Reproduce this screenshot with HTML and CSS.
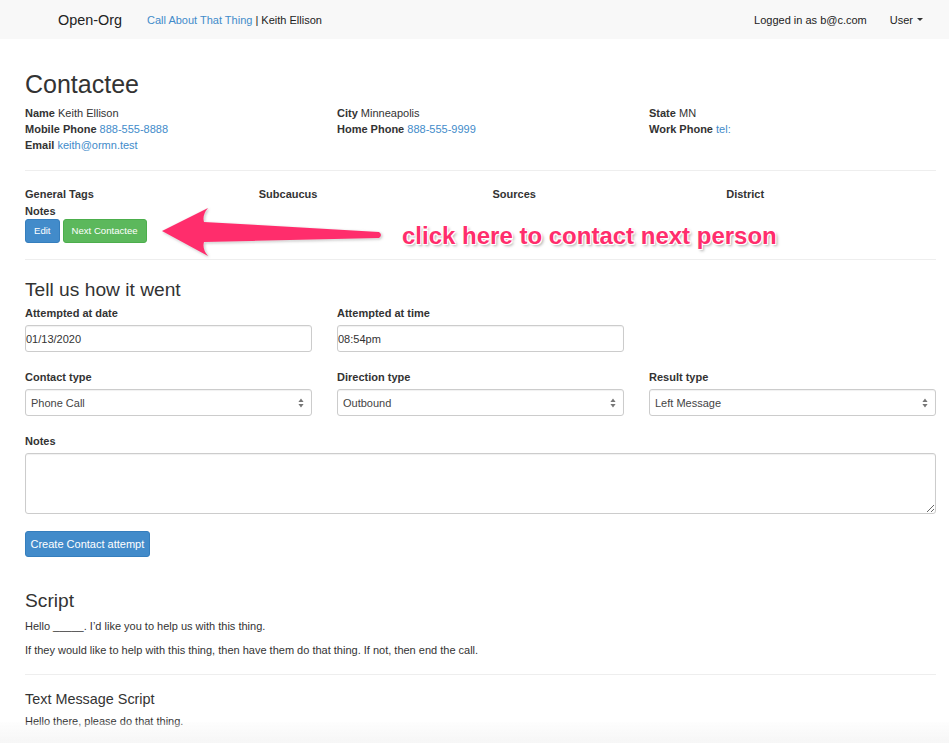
FILE: index.html
```html
<!DOCTYPE html>
<html lang="en">
<head>
<meta charset="utf-8">
<title>Open-Org</title>
<link rel="stylesheet" href="styles.css">
</head>
<body>
<nav class="navbar">
  <div class="nav-left">
    <span class="brand">Open-Org</span>
    <span class="crumb"><a href="#">Call About That Thing</a> | Keith Ellison</span>
  </div>
  <div class="nav-right">
    <span class="logged">Logged in as b@c.com</span>
    <span class="user">User <span class="caret"></span></span>
  </div>
</nav>

<main class="container">
  <h1 class="title">Contactee</h1>
  <div class="grid3 info">
    <div>
      <div><b>Name</b> Keith Ellison</div>
      <div><b>Mobile Phone</b> <a href="#">888-555-8888</a></div>
      <div><b>Email</b> <a href="#">keith@ormn.test</a></div>
    </div>
    <div>
      <div><b>City</b> Minneapolis</div>
      <div><b>Home Phone</b> <a href="#">888-555-9999</a></div>
    </div>
    <div>
      <div><b>State</b> MN</div>
      <div><b>Work Phone</b> <a href="#">tel:</a></div>
    </div>
  </div>
  <hr class="hr-a">
  <div class="grid4 tags">
    <b>General Tags</b><b>Subcaucus</b><b>Sources</b><b>District</b>
  </div>
  <div class="notes-label">Notes</div>
  <div class="btns">
    <button class="btn btn-sm btn-primary">Edit</button>
    <button class="btn btn-sm btn-success">Next Contactee</button>
  </div>
  <hr class="hr-b">

  <h3 class="h3-tell">Tell us how it went</h3>
  <div class="grid3 form-group">
    <div>
      <label>Attempted at date</label>
      <input class="form-control plain" type="text" value="01/13/2020">
    </div>
    <div>
      <label>Attempted at time</label>
      <input class="form-control plain" type="text" value="08:54pm">
    </div>
  </div>
  <div class="grid3 form-group">
    <div>
      <label>Contact type</label>
      <select class="form-control select"><option>Phone Call</option></select>
    </div>
    <div>
      <label>Direction type</label>
      <select class="form-control select"><option>Outbound</option></select>
    </div>
    <div>
      <label>Result type</label>
      <select class="form-control select"><option>Left Message</option></select>
    </div>
  </div>
  <div class="form-group">
    <label>Notes</label>
    <textarea class="form-control notes"></textarea>
  </div>
  <div class="submit-row">
    <button class="btn btn-primary btn-create">Create Contact attempt</button>
  </div>

  <h3 class="h3-script">Script</h3>
  <p>Hello _____. I’d like you to help us with this thing.</p>
  <p>If they would like to help with this thing, then have them do that thing. If not, then end the call.</p>
  <hr class="hr-c">
  <h4 class="h4-text">Text Message Script</h4>
  <p>Hello there, please do that thing.</p>
</main>

<div class="annotation">
  <svg class="arrow" width="240" height="64" viewBox="0 0 240 64">
    <path d="M12 31 L58 8 Q52 15 54 22 L229 32 Q233 35 229 38 L54 42 Q52 49 58 56 Z" fill="#ff2d6c"/>
  </svg>
  <span class="callout">click here to contact next person</span>
</div>

<div class="bottom-fade"></div>
</body>
</html>
```

FILE: styles.css
```css
html, body {
  margin: 0;
  padding: 0;
  background: #fff;
}
body {
  font-family: "Liberation Sans", Arial, sans-serif;
  font-size: 11px;
  line-height: 16px;
  color: #333;
  position: relative;
  min-height: 743px;
}
a {
  color: #428bca;
  text-decoration: none;
}

/* navbar */
.navbar {
  height: 39px;
  background: #f8f8f8;
  display: flex;
  align-items: center;
  justify-content: space-between;
  color: #222;
}
.nav-left {
  display: flex;
  align-items: center;
  padding-left: 58px;
}
.brand {
  font-size: 14.4px;
  line-height: 20px;
  color: #222;
}
.crumb {
  margin-left: 25px;
}
.nav-right {
  display: flex;
  align-items: center;
  padding-right: 26px;
}
.user {
  margin-left: 23px;
  display: inline-flex;
  align-items: center;
}
.caret {
  display: inline-block;
  width: 0;
  height: 0;
  margin-left: 4px;
  border-top: 3px solid #333;
  border-left: 3px solid transparent;
  border-right: 3px solid transparent;
}

/* container */
.container {
  margin-left: 25px;
  width: 911px;
  display: flex;
  flex-direction: column;
}
.title {
  font-size: 25px;
  line-height: 28px;
  font-weight: 500;
  margin: 31px 0 7px;
  color: #333;
}
.grid3 {
  display: grid;
  grid-template-columns: repeat(3, 1fr);
  column-gap: 25px;
}
.grid4 {
  display: grid;
  grid-template-columns: repeat(4, 1fr);
  column-gap: 24px;
}
.info b, .tags b, .notes-label {
  font-weight: bold;
}
hr {
  border: 0;
  border-top: 1px solid #eee;
  width: 100%;
  height: 0;
}
.hr-a { margin: 17px 0 15px; }
.tags { line-height: 17px; }
.notes-label { line-height: 16px; }
.btns {
  display: flex;
  gap: 3px;
}
.btn {
  font-family: "Liberation Sans", Arial, sans-serif;
  color: #fff;
  border: 1px solid transparent;
  border-radius: 3px;
  cursor: pointer;
  margin: 0;
}
.btn-sm {
  font-size: 9.6px;
  height: 24px;
  padding: 0 8px;
  line-height: 22px;
}
.btn-primary {
  background: #428bca;
  border-color: #357ebd;
}
.btn-success {
  background: #5cb85c;
  border-color: #4cae4c;
}
.hr-b { margin: 16px 0 19px; }

h3 {
  font-size: 19.2px;
  line-height: 21px;
  font-weight: 500;
  color: #333;
}
.h3-tell { margin: 0 0 5px; }
.form-group {
  margin-bottom: 17px;
}
label {
  display: block;
  font-weight: bold;
  line-height: 16px;
  margin-bottom: 4px;
}
.form-control {
  display: block;
  width: 100%;
  box-sizing: border-box;
  height: 27px;
  font-family: "Liberation Sans", Arial, sans-serif;
  font-size: 11px;
  color: #444;
  background-color: #fff;
  border: 1px solid #ccc;
  border-radius: 3px;
  box-shadow: inset 0 1px 1px rgba(0,0,0,0.06);
  margin: 0;
}
.plain {
  padding: 0;
  color: #333;
}
.select {
  -webkit-appearance: none;
  appearance: none;
  padding: 0 20px 0 5px;
  color: #444;
  background-image: url("data:image/svg+xml,%3Csvg xmlns='http://www.w3.org/2000/svg' width='6' height='10' viewBox='0 0 6 10'%3E%3Cpath d='M3 0.5L5.6 4H0.4z M3 9.5L0.4 6h5.2z' fill='%23777'/%3E%3C/svg%3E");
  background-repeat: no-repeat;
  background-position: right 7px center;
  background-size: 6px 10px;
}
.notes {
  height: 61px;
  padding: 4px 5px;
  resize: both;
}
.submit-row {
  display: flex;
}
.btn-create {
  font-size: 11px;
  height: 26px;
  padding: 0 4.5px;
  line-height: 24px;
}
.h3-script { margin: 33px 0 7px; }
p {
  margin: 0 0 8px;
  line-height: 16px;
}
.hr-c { margin: 8px 0 16px; }
.h4-text {
  font-size: 14.4px;
  line-height: 16px;
  font-weight: 500;
  margin: 0 0 6px;
  color: #333;
}

/* annotation overlay */
.annotation {
  position: absolute;
  left: 0;
  top: 0;
  width: 0;
  height: 0;
}
.arrow {
  position: absolute;
  left: 150px;
  top: 200px;
  filter: drop-shadow(0 0 1px rgba(255,255,255,0.9)) drop-shadow(1px 1px 1px rgba(0,0,0,0.25));
}
.callout {
  position: absolute;
  left: 402px;
  top: 222px;
  white-space: nowrap;
  font-family: "Liberation Sans", Arial, sans-serif;
  font-weight: bold;
  font-size: 24px;
  line-height: 28px;
  color: #ff2d6c;
  text-shadow: -1px -1px 0 #fff, 1px -1px 0 #fff, -1px 1px 0 #fff, 1px 1px 0 #fff, 0 -1px 0 #fff, 0 1px 0 #fff, 2px 2px 3px rgba(0,0,0,0.35);
}
.bottom-fade {
  position: fixed;
  left: 0;
  right: 0;
  bottom: 0;
  height: 21px;
  background: linear-gradient(to bottom, rgba(248,248,248,0.2), #f6f6f6);
  pointer-events: none;
}
```
